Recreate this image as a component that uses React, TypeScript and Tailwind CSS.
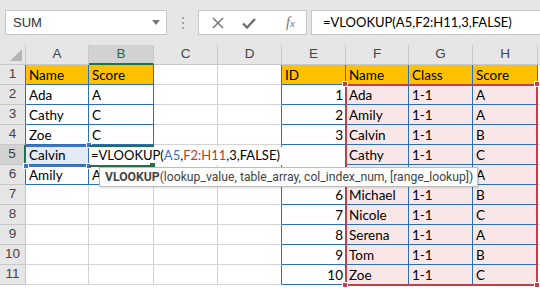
import clsx from "clsx";

const COLS = ["A", "B", "C", "D", "E", "F", "G", "H"];

const rows: string[][] = [
  ["Name", "Score", "", "", "ID", "Name", "Class", "Score"],
  ["Ada", "A", "", "", "1", "Ada", "1-1", "A"],
  ["Cathy", "C", "", "", "2", "Amily", "1-1", "A"],
  ["Zoe", "C", "", "", "3", "Calvin", "1-1", "B"],
  ["Calvin", "", "", "", "4", "Cathy", "1-1", "C"],
  ["Amily", "A", "", "", "", "", "", "A"],
  ["", "", "", "", "6", "Michael", "1-1", "B"],
  ["", "", "", "", "7", "Nicole", "1-1", "C"],
  ["", "", "", "", "8", "Serena", "1-1", "A"],
  ["", "", "", "", "9", "Tom", "1-1", "B"],
  ["", "", "", "", "10", "Zoe", "1-1", "C"],
];

const cellFont = { fontFamily: "Lato, 'Liberation Sans', sans-serif" };

function Handle({ className }: { className: string }) {
  return <div className={clsx("absolute w-[6px] h-[6px] border border-white", className)} />;
}

function Toolbar() {
  return (
    <div className="h-[45px] bg-[#e6e6e6] flex items-start pt-[10px] pl-[5px]">
      <div className="w-[162px] h-[25px] bg-white border border-[#c6c6c6] flex items-center justify-between pl-[7px] pr-[6px]">
        <span className="text-[13px] text-[#333]" style={{ fontFamily: "'Liberation Sans', sans-serif" }}>SUM</span>
        <svg width="8" height="5" viewBox="0 0 8 5"><path d="M0 0h8L4 5z" fill="#7a7a7a" /></svg>
      </div>
      <div className="w-[31px] h-[25px] flex flex-col items-center justify-center gap-[3px]">
        <div className="w-[2px] h-[2px] bg-[#a6a6a6]" />
        <div className="w-[2px] h-[2px] bg-[#a6a6a6]" />
        <div className="w-[2px] h-[2px] bg-[#a6a6a6]" />
      </div>
      <div className="w-[109px] h-[25px] bg-white border border-[#c6c6c6] flex items-center pl-[13px] gap-[18px]">
        <svg width="12" height="12" viewBox="0 0 12 12">
          <path d="M1 1l10 10M11 1L1 11" stroke="#6e6e6e" strokeWidth="1.4" />
        </svg>
        <svg width="14" height="12" viewBox="0 0 14 12">
          <path d="M1 6.5l4 4L13 2" stroke="#6e6e6e" strokeWidth="2.4" fill="none" />
        </svg>
        <span className="ml-[12px] text-[14px] italic text-[#6e6e6e]" style={{ fontFamily: "'Liberation Serif', serif" }}>
          f<span className="text-[11px]">x</span>
        </span>
      </div>
      <div className="flex-1 ml-[4px] -mr-px h-[25px] bg-white border border-[#c6c6c6] flex items-center pl-[11px]">
        <span className="text-[13px] text-black" style={cellFont}>=VLOOKUP(A5,F2:H11,3,FALSE)</span>
      </div>
    </div>
  );
}

export default function App() {
  return (
    <div className="w-[540px] h-[288px] overflow-hidden bg-white">
      <Toolbar />
      <div className="relative">
        <div className="grid grid-cols-[26px_63px_65px_64px_64px_64px_63px_64px_65px_1fr] auto-rows-[20px]">
          {/* column header row */}
          <div className="bg-[#e6e6e6] border-r border-b border-[#c8c8c8] relative">
            <svg className="absolute right-[3px] bottom-[3px]" width="12" height="12" viewBox="0 0 12 12">
              <path d="M12 0V12H0z" fill="#b4b4b4" />
            </svg>
          </div>
          {COLS.map((c) => (
            <div
              key={c}
              className={clsx(
                "border-r border-[#c8c8c8] flex items-center justify-center text-[13.5px]",
                c === "B"
                  ? "bg-[#d2d2d2] border-b-2 border-b-[#217346] text-[#1e6b40]"
                  : "bg-[#e6e6e6] border-b text-[#444]",
              )}
              style={{ fontFamily: "'Liberation Sans', sans-serif" }}
            >
              {c}
            </div>
          ))}
          <div className="bg-[#e6e6e6] border-b border-[#c8c8c8]" />

          {rows.map((row, r) => (
            <div key={r} className="contents">
              <div
                className={clsx(
                  "flex items-center justify-center text-[13.5px] border-b border-[#c8c8c8]",
                  r === 4
                    ? "bg-[#d2d2d2] text-[#3c3c3c] border-r-2 border-r-[#217346]"
                    : "bg-[#e6e6e6] text-[#444] border-r",
                  r <= 5 && r !== 4 && "border-r-[#2f6db5]",
                )}
                style={{ fontFamily: "'Liberation Sans', sans-serif" }}
              >
                {r + 1}
              </div>
              {row.map((v, c) => {
                const inLeft = c <= 1 && r <= 5;
                const inRight = c >= 4;
                const header = r === 0 && (c <= 1 || c >= 4);
                const pink = r >= 1 && c >= 5;
                const num = c === 4 && r >= 1;
                return (
                  <div
                    key={c}
                    className={clsx(
                      "border-r border-b border-[#d4d4d4] px-[3px] whitespace-nowrap overflow-hidden text-[13.5px] leading-[20px] text-black",
                      (inLeft || inRight || c === 3) && "border-r-[#2f6db5]",
                      (inLeft || inRight) && "border-b-[#2f6db5]",
                      header && "bg-[#ffc000]",
                      pink && "bg-[#f9e7e7]",
                      r === 4 && c === 0 && "bg-[#e4ebf7]",
                      num && "text-right pr-[2px]",
                    )}
                    style={cellFont}
                  >
                    {v}
                  </div>
                );
              })}
              <div className="border-b border-[#d4d4d4]" />
            </div>
          ))}
        </div>

        {/* A5 reference highlight */}
        <div className="absolute left-[26px] top-[100px] w-[64px] h-[2px] bg-[#4472c4]" />
        <div className="absolute left-[26px] top-[120px] w-[64px] h-[2px] bg-[#4472c4]" />
        <Handle className="left-[86px] top-[97px] bg-[#4472c4]" />
        <Handle className="left-[86px] top-[118px] bg-[#4472c4]" />
        <Handle className="left-[23px] top-[118px] bg-[#4472c4]" />

        {/* F2:H11 reference range */}
        <div className="absolute left-[345px] top-[39px] w-[193px] h-[202px] border-2 border-[#c0414b]" />
        <Handle className="left-[342px] top-[36px] bg-[#c0414b]" />
        <Handle className="left-[534px] top-[36px] bg-[#c0414b]" />
        <Handle className="left-[342px] top-[237px] bg-[#c0414b]" />
        <Handle className="left-[534px] top-[237px] bg-[#c0414b]" />

        {/* in-cell edit of B5 */}
        <div className="absolute left-[90px] top-[102px] w-[255px] h-[18px] bg-white flex items-center pl-[1px]">
          <span className="text-[13px] text-black whitespace-nowrap" style={cellFont}>
            =VLOOKUP(<span className="text-[#3d6fc9]">A5</span>,<span className="text-[#c0392b]">F2:H11</span>,3,FALSE)
          </span>
        </div>
        <div className="absolute left-[89px] top-[100px] w-[65px] h-[2px] bg-[#217346]" />
        <div className="absolute left-[89px] top-[120px] w-[65px] h-[2px] bg-[#217346]" />
        <div className="absolute left-[150px] top-[118px] w-[5px] h-[5px] bg-[#217346]" />

        {/* function tooltip */}
        <div
          className="absolute left-[99px] top-[122px] w-[379px] h-[20px] bg-white border border-[#bdbdbd] shadow-[1px_1px_2px_rgba(0,0,0,0.15)] flex items-center pl-[5px] text-[12.2px] text-[#444] whitespace-nowrap"
          style={{ fontFamily: "Roboto, 'Liberation Sans', sans-serif" }}
        >
          <span className="font-bold">VLOOKUP</span>(lookup_value, table_array, col_index_num, [range_lookup])
        </div>
      </div>
    </div>
  );
}
